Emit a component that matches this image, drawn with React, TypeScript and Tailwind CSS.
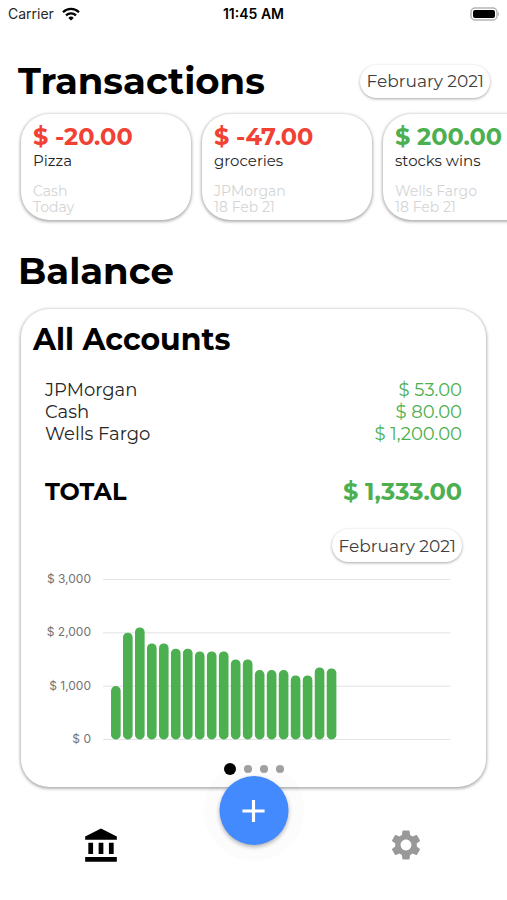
import { MdAccountBalance, MdAdd, MdSettings } from 'react-icons/md'

interface Transaction {
  amount: string
  title: string
  account: string
  date: string
  income?: boolean
}

const transactions: Transaction[] = [
  { amount: '$ -20.00', title: 'Pizza', account: 'Cash', date: 'Today' },
  { amount: '$ -47.00', title: 'groceries', account: 'JPMorgan', date: '18 Feb 21' },
  { amount: '$ 200.00', title: 'stocks wins', account: 'Wells Fargo', date: '18 Feb 21', income: true },
]

const accounts = [
  { name: 'JPMorgan', balance: '$ 53.00' },
  { name: 'Cash', balance: '$ 80.00' },
  { name: 'Wells Fargo', balance: '$ 1,200.00' },
]

const history = [
  1000, 2000, 2100, 1800, 1800, 1700, 1700, 1650, 1650, 1650,
  1500, 1500, 1300, 1300, 1300, 1200, 1200, 1350, 1330,
]

const ticks = ['$ 3,000', '$ 2,000', '$ 1,000', '$ 0']

function StatusBar() {
  return (
    <div className="grid h-7 grid-cols-3 items-center px-2 font-['Inter',sans-serif] text-sm text-neutral-800">
      <div className="flex items-center gap-2">
        <span>Carrier</span>
        <svg width="18" height="14" viewBox="0 0 18 14" fill="none" stroke="#000" strokeWidth="2.3" aria-hidden="true">
          <path d="M1 5.2a11.4 11.4 0 0 1 16 0" />
          <path d="M4 8.4a7.2 7.2 0 0 1 10 0" />
          <path d="M9 13.6 6.3 10.9a3.9 3.9 0 0 1 5.4 0Z" fill="#000" stroke="none" />
        </svg>
      </div>
      <span className="text-center font-semibold text-black">11:45 AM</span>
      <svg className="justify-self-end" width="31" height="15" viewBox="0 0 31 15" aria-hidden="true">
        <rect x="3" y="1" width="26" height="12" rx="4" fill="#fff" stroke="#b5b5b5" strokeWidth="1.5" />
        <rect x="5" y="3" width="22" height="8" rx="2" fill="#000" />
        <path d="M30 5c1.4.5 1.4 3.4 0 4Z" fill="#b5b5b5" />
      </svg>
    </div>
  )
}

function MonthButton() {
  return (
    <button className="h-[33px] rounded-full bg-white px-1.5 pt-[2px] text-[17px] whitespace-nowrap text-neutral-700 shadow-[0_1px_3px_rgba(0,0,0,0.35)]">
      February 2021
    </button>
  )
}

function TransactionCard({ amount, title, account, date, income }: Transaction) {
  return (
    <article className="h-[106px] w-[170px] shrink-0 rounded-[28px] bg-white px-3 pt-[9px] shadow-[0_1px_3px_1px_rgba(0,0,0,0.3)]">
      <p className={`text-2xl leading-7 font-bold whitespace-nowrap ${income ? 'text-[#4caf50]' : 'text-[#f04134]'}`}>
        {amount}
      </p>
      <p className="text-[15px] leading-5 text-neutral-800">{title}</p>
      <p className="mt-3 text-sm leading-4 text-neutral-300">{account}</p>
      <p className="text-sm leading-4 text-neutral-300">{date}</p>
    </article>
  )
}

function Chart() {
  return (
    <div className="mt-2 flex gap-3 pr-3">
      <div className="flex h-[176px] w-[46px] flex-col justify-between text-right font-['Inter',sans-serif] text-xs leading-4 whitespace-nowrap text-neutral-500">
        {ticks.map((tick) => (
          <span key={tick}>{tick}</span>
        ))}
      </div>
      <svg className="mt-2 min-w-0 flex-1 self-start" viewBox="0 0 346 161" role="img" aria-label="Balance history">
        {ticks.map((tick, i) => (
          <rect key={tick} y={i * 53.2} width="346" height="1" fill="#e2e2e2" />
        ))}
        {history.map((value, i) => (
          <rect
            key={i}
            x={8 + i * 11.95}
            y={160 - value * 0.0532}
            width="9.6"
            height={value * 0.0532}
            rx="4.6"
            fill="#4caf50"
          />
        ))}
      </svg>
    </div>
  )
}

export default function App() {
  return (
    <div className="flex min-h-screen flex-col overflow-hidden bg-white font-['Montserrat','Inter',sans-serif] text-black">
      <StatusBar />

      <main>
        <header className="mt-[31px] flex h-11 items-center justify-between pr-[17px] pl-[18px]">
          <h1 className="text-[37px] font-bold">Transactions</h1>
          <MonthButton />
        </header>

        <div className="flex gap-[11px] overflow-x-auto px-[21px] pt-[11px] pb-3 [scrollbar-width:none]">
          {transactions.map((item) => (
            <TransactionCard key={item.title} {...item} />
          ))}
        </div>

        <h2 className="mt-[17px] px-[18px] text-[37px] leading-[44px] font-bold">Balance</h2>

        <section className="mx-[21px] mt-4 rounded-[28px] bg-white px-3 pt-[11px] pb-3 shadow-[0_1px_3px_1px_rgba(0,0,0,0.3)]">
          <h3 className="text-[30px] leading-10 font-bold">All Accounts</h3>
          <div className="px-3 pt-[19px]">
            <dl className="text-lg leading-[22px]">
              {accounts.map((account) => (
                <div key={account.name} className="flex justify-between">
                  <dt className="text-neutral-800">{account.name}</dt>
                  <dd className="text-[#4caf50]">{account.balance}</dd>
                </div>
              ))}
            </dl>
            <div className="mt-[31px] flex justify-between text-2xl font-bold">
              <span>TOTAL</span>
              <span className="text-[#4caf50]">{'$ 1,333.00'}</span>
            </div>
            <div className="mt-[21px] flex justify-end">
              <MonthButton />
            </div>
            <div className="pt-px">
              <Chart />
            </div>
          </div>

          {/* account pages */}
          <div className="mt-4 flex items-center justify-center gap-2">
            <button className="size-3 rounded-full bg-black" aria-label="All accounts" />
            <button className="size-2 rounded-full bg-neutral-400" aria-label="JPMorgan" />
            <button className="size-2 rounded-full bg-neutral-400" aria-label="Cash" />
            <button className="size-2 rounded-full bg-neutral-400" aria-label="Wells Fargo" />
          </div>
        </section>
      </main>

      <nav className="relative mt-[5px] grid flex-1 grid-cols-[2fr_1fr_2fr] justify-items-center bg-white pt-[35px]">
        <a href="#accounts" aria-label="Accounts" className="self-start">
          <MdAccountBalance size={38} color="#000" />
        </a>
        <button
          aria-label="Add transaction"
          className="absolute -top-4 left-1/2 flex size-[69px] -translate-x-1/2 items-center justify-center rounded-full bg-[#448aff] shadow-[0_2px_4px_rgba(0,0,0,0.3),0_0_0_16px_rgba(0,0,0,0.01)]"
        >
          <MdAdd size={38} color="#fff" />
        </button>
        <a href="#settings" aria-label="Settings" className="col-start-3 self-start">
          <MdSettings size={36} color="#999" />
        </a>
      </nav>
    </div>
  )
}
